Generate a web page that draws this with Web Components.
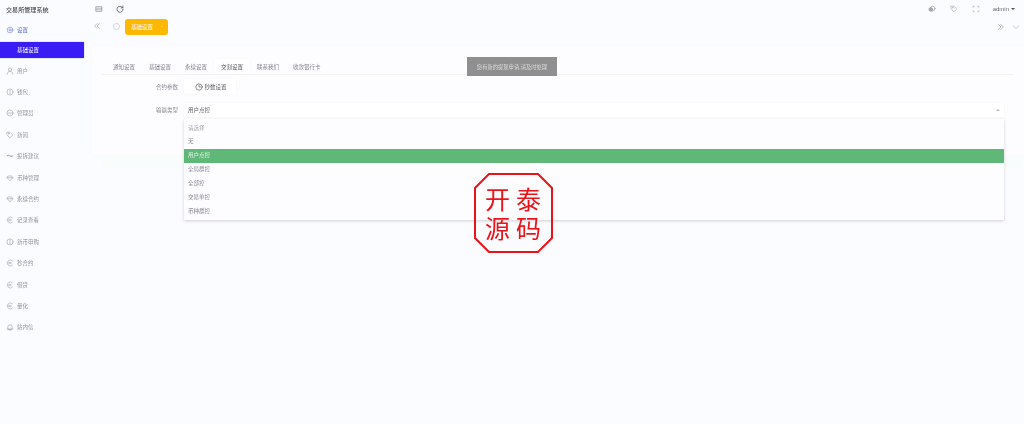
<!DOCTYPE html>
<html lang="zh">
<head>
<meta charset="utf-8">
<title>交易所管理系统</title>
<style>
    html, body { margin: 0; height: 100%; }
    body { background: #fbfcff; color: #606266; overflow: hidden;
        font: 5.5px "Liberation Sans", "Noto Sans CJK SC", sans-serif; }
</style>
</head>
<body>
<admin-app>
    <side-nav slot="side" title="交易所管理系统">
        <nav-item icon="gear" dark>设置</nav-item>
        <nav-item active>基础设置</nav-item>
        <nav-item icon="user">用户</nav-item>
        <nav-item icon="coin">钱包</nav-item>
        <nav-item icon="minus">管理员</nav-item>
        <nav-item icon="tag">新闻</nav-item>
        <nav-item icon="chat">投拆建议</nav-item>
        <nav-item icon="gem">币种管理</nav-item>
        <nav-item icon="gem">永续合约</nav-item>
        <nav-item icon="cny">记录查看</nav-item>
        <nav-item icon="coin">新币申购</nav-item>
        <nav-item icon="cny">秒合约</nav-item>
        <nav-item icon="cny">借贷</nav-item>
        <nav-item icon="cny">量化</nav-item>
        <nav-item icon="bell">站内信</nav-item>
    </side-nav>
    <top-bar slot="top" user="admin"></top-bar>
    <page-tabs slot="top" label="基础设置"></page-tabs>
    <settings-card slot="main">
        <card-tabs active="交割设置" items="通知设置,基础设置,永续设置,交割设置,联系我们,收款银行卡"></card-tabs>
        <form-row label="合约参数"><clock-button>秒数设置</clock-button></form-row>
        <form-row label="输赢类型">
            <select-box value="用户点控" options="请选择,无,用户点控,全局群控,全部控,交易单控,币种群控"></select-box>
        </form-row>
    </settings-card>
    <toast-note slot="over">您有新的提现申请,请及时处理</toast-note>
    <seal-stamp slot="over"></seal-stamp>
</admin-app>

<script>
const ICONS = {
    gear: '<circle cx="5" cy="5" r="3.6"/><circle cx="5" cy="5" r="1.4"/>',
    user: '<circle cx="5" cy="3.2" r="2"/><path d="M1.6 9c0-2.4 1.5-3.6 3.4-3.6S8.4 6.6 8.4 9"/>',
    coin: '<circle cx="5" cy="5" r="3.8"/><path d="M5 2.8v4.4"/>',
    minus: '<circle cx="5" cy="5" r="3.8"/><path d="M2.8 5h4.4"/>',
    tag: '<path d="M1.5 1.5H5L8.5 5 5 8.5 1.5 5z"/><circle cx="3.4" cy="3.4" r=".5"/>',
    chat: '<path d="M1.5 4.8c1-1 2-1 3.5 0s2.5 1 3.5 0" stroke-width="1.3"/>',
    gem: '<path d="M2.8 2.5h4.4l1.3 2.2L5 8.5 1.5 4.700z"/><path d="M1.5 4.7h7"/>',
    cny: '<path d="M8 2.2a3.8 3.8 0 1 0 0 5.6"/><path d="M3.4 4.2h3M3.4 5.8h3"/>',
    bell: '<path d="M2.3 7.5V4.8a2.7 2.7 0 0 1 5.4 0v2.7zM1.4 7.5h7.2M4.2 9h1.6"/>'
};

function svg(path, size, color, width) {
    return `<svg viewBox="0 0 10 10" width="${size}" height="${size}" fill="none" stroke="${color}"
        stroke-width="${width || .8}" stroke-linecap="round" stroke-linejoin="round">${path}</svg>`;
}

class Base extends HTMLElement {
    constructor() {
        super();
        this.attachShadow({mode: 'open'});
    }
    connectedCallback() {
        this.render();
    }
}

class AdminApp extends Base {
    render() {
        this.shadowRoot.innerHTML = `
            <style>
                :host { display: grid; grid-template-columns: 92px 1fr; width: 1024px; height: 424px; position: relative; }
                .side { filter: blur(.3px); }
                .right { display: flex; flex-direction: column; min-width: 0; filter: blur(.3px); }
                .main { padding: 11px 0 0 0; }
            </style>
            <div class="side"><slot name="side"></slot></div>
            <div class="right">
                <slot name="top"></slot>
                <div class="main"><slot name="main"></slot></div>
            </div>
            <slot name="over"></slot>
        `;
    }
}

class SideNav extends Base {
    render() {
        this.shadowRoot.innerHTML = `
            <style>
                :host { display: block; }
                h1 { margin: 0; padding: 5px 0 0 6px; height: 14px; font-size: 6.1px; line-height: 9px; font-weight: 500; color: #4a4d52; }
                nav { display: flex; flex-direction: column; padding: 0 8px 0 0; }
            </style>
            <h1>${this.getAttribute('title')}</h1>
            <nav><slot></slot></nav>
        `;
    }
}

class NavItem extends Base {
    render() {
        const active = this.hasAttribute('active');
        const icon = ICONS[this.getAttribute('icon')];
        const dark = this.hasAttribute('dark');
        this.shadowRoot.innerHTML = `
            <style>
                :host { display: block; }
                .row { display: flex; align-items: center; gap: 3px; height: 21.4px; padding-left: 6px;
                    color: ${dark ? '#5a6bd0' : '#92959b'}; }
                .row.active { height: 16px; margin: 1.3px 0 2.3px; padding-left: 17px; background: #3a1cf5; color: #fff;
                    box-shadow: 0 0 1px #8a7cf5; }
                svg { flex: none; }
            </style>
            <div class="row ${active ? 'active' : ''}">${icon ? svg(icon, 8, dark ? '#7a88cc' : '#a2a5ab') : ''}<slot></slot></div>
        `;
    }
}

class TopBar extends Base {
    render() {
        this.shadowRoot.innerHTML = `
            <style>
                :host { display: flex; align-items: center; height: 18px; color: #555; }
                .left { display: flex; align-items: center; gap: 13px; padding-left: 3px; }
                .right { margin-left: auto; display: flex; align-items: center; gap: 14px; padding-right: 9px; }
                .user { display: flex; align-items: center; gap: 2px; color: #6b6e73; font-size: 6px; margin-left: -1px; }
                .caret { width: 0; height: 0; border: 2.5px solid transparent; border-top-color: #555; border-bottom: 0; }
            </style>
            <div class="left">
                ${svg('<path d="M1.5 2h7v6h-7zM1.5 4h7M1.5 6h7"/>', 8, '#8a8c90')}
                ${svg('<path d="M8.3 3.5A3.8 3.8 0 1 0 8.8 5.500"/><path d="M8.6 1.3v2.4H6.3"/>', 8, '#555', 1)}
            </div>
            <div class="right">
                ${svg('<circle cx="5.8" cy="4.5" r="3"/><circle cx="3.5" cy="5.5" r="2.3" fill="#aaa"/>', 8, '#999')}
                ${svg('<path d="M1.5 1.5H5L8.5 5 5 8.5 1.5 5z"/><circle cx="3.4" cy="3.4" r=".5"/>', 8, '#aaa')}
                ${svg('<path d="M1.5 3V1.5H3M7 1.5h1.5V3M1.5 7v1.5H3M7 8.5h1.5V7"/>', 8, '#aaa')}
                <span class="user">${this.getAttribute('user')}<i class="caret"></i></span>
            </div>
        `;
    }
}

class PageTabs extends Base {
    render() {
        this.shadowRoot.innerHTML = `
            <style>
                :host { display: flex; align-items: center; height: 17px; }
                .back { margin-left: 1px; }
                .dot { width: 5px; height: 5px; border: 1px solid #d2d4d9; border-radius: 50%; margin-left: 12px; }
                .tag { width: 43px; height: 16px; margin-left: 5px; box-sizing: border-box; padding: 0 5px 0 6px; display: flex;
                    align-items: center; justify-content: space-between; background: #ffb800; border-radius: 3px; color: #fff; }
                .tag i { width: 0; height: 0; border: 1.5px solid transparent; border-top-color: #ffe08a; border-bottom: 0; }
                .end { margin-left: auto; display: flex; align-items: center; gap: 7px; padding-right: 4px; }
            </style>
            <span class="back">${svg('<path d="M5 2 2 5l3 3M8 2 5 5l3 3"/>', 8, '#9a9da3')}</span>
            <span class="dot"></span>
            <span class="tag">${this.getAttribute('label')}<i></i></span>
            <span class="end">
                ${svg('<path d="M2 2l3 3-3 3M5 2l3 3-3 3"/>', 8, '#9a9da3')}
                ${svg('<path d="M1.5 3.5 5 7l3.5-3.5"/>', 8, '#a8abb0')}
            </span>
        `;
    }
}

class SettingsCard extends Base {
    render() {
        this.shadowRoot.innerHTML = `
            <style>
                :host { display: block; height: 109px; position: relative; }
                .card { height: 109px; box-sizing: border-box; padding: 13px 0 0 14px; background: #fdfdff;
                    box-shadow: 0 0 1px #eef0f4; display: flex; flex-direction: column; }
                .foot { height: 12px; margin-left: 10px; background: #f8fcfb; width: 920px; }
            </style>
            <div class="card"><slot></slot></div>
            <div class="foot"></div>
        `;
    }
}

class CardTabs extends Base {
    render() {
        const active = this.getAttribute('active');
        const tabs = this.getAttribute('items').split(',').map((t) =>
            `<span class="tab ${t === active ? 'on' : ''}">${t}</span>`).join('');
        this.shadowRoot.innerHTML = `
            <style>
                :host { display: flex; height: 15px; margin: 0 10px 4px -4px; border-bottom: 1px solid #f2f3f6; padding-left: 4px; }
                .tab { display: flex; align-items: center; height: 15px; padding: 0 7px; color: #84878d; box-sizing: border-box; }
                .tab.on { color: #55585e; background: #fff; box-shadow: 0 0 1px #e9eaee; }
            </style>
            ${tabs}
        `;
    }
}

class FormRow extends Base {
    render() {
        this.shadowRoot.innerHTML = `
            <style>
                :host { display: flex; align-items: center; margin-bottom: 9px; }
                label { width: 78px; padding-right: 6px; text-align: right; color: #8c8f95; flex: none; box-sizing: border-box; }
                .field { flex: 1; min-width: 0; margin-right: 20px; }
            </style>
            <label>${this.getAttribute('label')}</label>
            <div class="field"><slot></slot></div>
        `;
    }
}

class ClockButton extends Base {
    render() {
        this.shadowRoot.innerHTML = `
            <style>
                :host { display: inline-flex; align-items: center; gap: 1.5px; width: 52px; height: 15px; box-sizing: border-box;
                    padding-left: 11px; background: #fff; box-shadow: 0 0 1px #e9eaee; color: #5c5f65; vertical-align: top; }
            </style>
            ${svg('<circle cx="5" cy="5" r="4"/><path d="M5 2.8V5h1.8"/>', 8, '#555')}
            <slot></slot>
        `;
    }
}

class SelectBox extends Base {
    render() {
        const value = this.getAttribute('value');
        const options = this.getAttribute('options').split(',').map((o, i) =>
            `<div class="opt ${i === 0 ? 'hint' : ''} ${o === value ? 'on' : ''}">${o}</div>`).join('');
        this.shadowRoot.innerHTML = `
            <style>
                :host { display: block; position: relative; }
                .box { display: flex; align-items: center; justify-content: space-between; height: 14px; padding: 0 4px;
                    background: #fff; box-shadow: 0 0 1px #e9eaee; color: #55585e; }
                .arrow { width: 0; height: 0; border: 2px solid transparent; border-bottom-color: #b5b7bb; border-top: 0; }
                .menu { position: absolute; left: 0; right: 0; top: 16px; height: 101px; box-sizing: border-box; padding-top: 2.5px;
                    background: #fdfdff; box-shadow: 0 1px 3px rgba(0,0,0,.18); }
                .opt { height: 13.9px; line-height: 13.9px; padding-left: 4px; color: #84878d; }
                .opt.hint { color: #a9abb0; }
                .opt.on { background: #5fb878; color: #e7f5eb; }
            </style>
            <div class="box"><span>${value}</span><i class="arrow"></i></div>
            <div class="menu">${options}</div>
        `;
    }
}

class ToastNote extends Base {
    render() {
        this.shadowRoot.innerHTML = `
            <style>
                :host { position: absolute; left: 467px; top: 57px; width: 90px; height: 19px; display: flex; filter: blur(.3px);
                    align-items: center; justify-content: center; background: #8f8f8f; color: #ddd; font-size: 5.3px; }
            </style>
            <slot></slot>
        `;
    }
}

class SealStamp extends Base {
    render() {
        this.shadowRoot.innerHTML = `
            <style>
                :host { position: absolute; left: 474px; top: 173px; width: 79px; height: 80px; }
                svg { position: absolute; inset: 0; }
                .chars { position: absolute; left: 9.5px; top: 13px; display: grid;
                    grid-template-columns: 28px 28px; grid-template-rows: 29px 29px; column-gap: 3px; color: #e8141a;
                    font: 400 25px/29px "Liberation Serif", "Noto Sans CJK SC", sans-serif; text-align: center; }
            </style>
            <svg viewBox="0 0 79 80" width="79" height="80" fill="none" stroke="#e8141a" stroke-width="2">
                <path d="M15 1h49l14 14v50L64 79H15L1 65V15z"/>
            </svg>
            <div class="chars"><span>开</span><span>泰</span><span>源</span><span>码</span></div>
        `;
    }
}

customElements.define('admin-app', AdminApp);
customElements.define('side-nav', SideNav);
customElements.define('nav-item', NavItem);
customElements.define('top-bar', TopBar);
customElements.define('page-tabs', PageTabs);
customElements.define('settings-card', SettingsCard);
customElements.define('card-tabs', CardTabs);
customElements.define('form-row', FormRow);
customElements.define('clock-button', ClockButton);
customElements.define('select-box', SelectBox);
customElements.define('toast-note', ToastNote);
customElements.define('seal-stamp', SealStamp);
</script>
</body>
</html>
